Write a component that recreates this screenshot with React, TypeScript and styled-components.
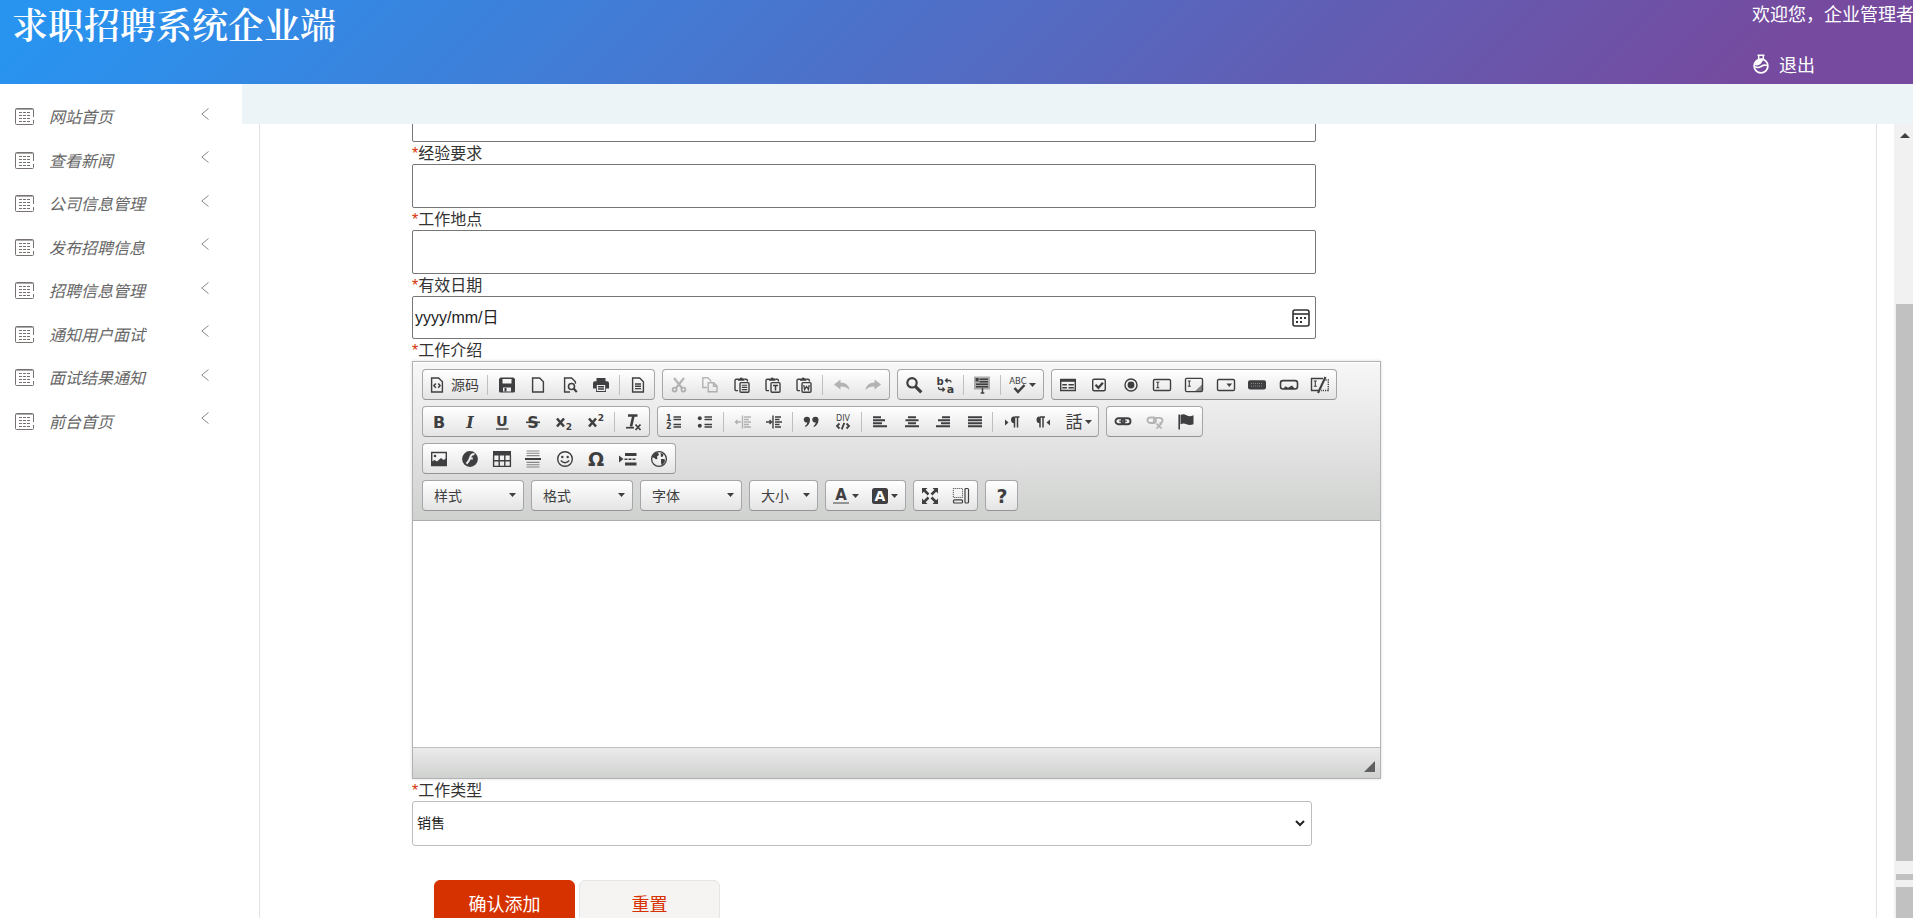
import React from 'react';
import styled, { createGlobalStyle } from 'styled-components';

const INK = '#3f3f41';
const SANS = '"Liberation Sans", "Noto Sans CJK SC", sans-serif';
const CJK = '"Noto Sans CJK SC", "Liberation Sans", sans-serif';

const GlobalStyle = createGlobalStyle`
  *, *::before, *::after { box-sizing: border-box; }
  html, body { margin: 0; padding: 0; overflow: hidden; }
  body { background: #fff; color: #333; font: 16px/22px ${SANS}; }
  button, input, select { font-family: inherit; margin: 0; }
`;

/* ---------- page frame ---------- */

const Page = styled.div`
  display: flex;
  flex-direction: column;
  height: 100vh;
`;

const Header = styled.header`
  display: flex;
  justify-content: space-between;
  flex: none;
  height: 84px;
  padding-left: 12px;
  color: #fff;
  background: linear-gradient(135deg, #2894f0 3%, #764a9e 92%);
`;

const Title = styled.h1`
  margin: 0;
  font: 600 36px/54px "Liberation Serif", "Noto Serif CJK SC", "Noto Sans CJK SC", serif;
`;

const Account = styled.div`
  display: flex;
  flex-direction: column;
  flex: none;
  width: 161px;
  font: 18px/26px ${CJK};
  white-space: nowrap;
`;

const Logout = styled.a`
  display: flex;
  align-items: center;
  gap: 9px;
  margin-top: 25px;
  color: inherit;
  text-decoration: none;
`;

const Body = styled.div`
  display: flex;
  flex: 1;
  min-height: 0;
`;

const Sidebar = styled.nav`
  flex: none;
  width: 242px;
  background: #fff;
`;

const Menu = styled.ul`
  display: flex;
  flex-direction: column;
  justify-content: space-between;
  height: 348px;
  margin: 0;
  padding: 11px 0 0;
  list-style: none;
  box-sizing: content-box;
`;

const MenuLink = styled.a`
  display: flex;
  align-items: center;
  height: 43px;
  padding: 0 33px 0 15px;
  color: #666;
  font: italic 16px/43px ${CJK};
  text-decoration: none;
`;

const MenuText = styled.span`
  flex: 1;
  padding-left: 15px;
`;

const ArrowSlot = styled.span`
  display: flex;
  padding-bottom: 6px;
`;

const Main = styled.main`
  display: flex;
  flex-direction: column;
  flex: 1;
  min-width: 0;
`;

const Strip = styled.div`
  flex: none;
  height: 40px;
  background: #edf4f8;
`;

const Viewport = styled.div`
  display: flex;
  flex: 1;
  min-height: 0;
`;

const Scroller = styled.div`
  flex: 1;
  min-width: 0;
  padding: 0 17px;
  overflow: hidden;
`;

const ScrollTrack = styled.div`
  display: flex;
  flex-direction: column;
  align-items: center;
  flex: none;
  width: 19px;
  padding: 9px 0 0 2px;
  background: #f1f1f1;
`;

const ScrollUp = styled.div`
  margin-bottom: 166px;
  border: 5px solid transparent;
  border-top: 0;
  border-bottom-color: #404040;
`;

const ScrollThumb = styled.div<{ $h: number; $after: number }>`
  flex: none;
  width: 17px;
  height: ${p => p.$h}px;
  margin-bottom: ${p => p.$after}px;
  background: #c1c1c1;
`;

const Panel = styled.section`
  min-height: 100%;
  padding-left: 152px;
  border: solid #e2e2e2;
  border-width: 0 1px;
`;

/* ---------- form ---------- */

const Form = styled.form`
  display: flex;
  flex-direction: column;
  margin-top: -26px;
`;

const Label = styled.label`
  height: 22px;
  color: #333;
  line-height: 24px;

  &::before {
    content: '*';
    color: #d63200;
  }
`;

const TextInput = styled.input`
  width: 100%;
  max-width: 904px;
  height: 44px;
  padding: 0 3px;
  border: 1px solid #767676;
  border-radius: 2px;
  background: #fff;
  font-size: 16px;
`;

const DateField = styled.div`
  display: flex;
  align-items: center;
  max-width: 904px;
  height: 43px;
  padding: 0 5px 0 2px;
  border: 1px solid #767676;
  border-radius: 2px;
`;

const DateInput = styled.input`
  flex: 1;
  padding: 0;
  border: 0;
  outline: 0;
  background: none;
  font-size: 16px;
  &::placeholder { color: #222; opacity: 1; }
`;

const PlainButton = styled.button`
  display: flex;
  padding: 0;
  border: 0;
  background: none;
`;

const SelectField = styled.div`
  display: grid;
  align-items: center;
  max-width: 900px;
  > * { grid-area: 1 / 1; }
  > svg { justify-self: end; margin-right: 7px; pointer-events: none; }
`;

const Select = styled.select`
  height: 45px;
  padding: 0 4px 3px;
  border: 1px solid #bdbdbd;
  border-radius: 3px;
  background: #fff;
  color: #222;
  font: 14px ${CJK};
  appearance: none;
`;

const Actions = styled.div`
  display: flex;
  gap: 4px;
  margin-top: 34px;
  padding-left: 22px;
`;

const ActionButton = styled.button<{ $primary?: boolean }>`
  width: 141px;
  height: 46px;
  border: 1px solid ${p => (p.$primary ? '#d63200' : '#e5e5e5')};
  border-radius: 6px;
  background: ${p => (p.$primary ? '#d63200' : '#f5f4f3')};
  color: ${p => (p.$primary ? '#fff' : '#d63200')};
  font: 18px ${CJK};
`;

/* ---------- rich text editor ---------- */

const Editor = styled.div`
  max-width: 969px;
  border: 1px solid #b2b2b6;
  box-shadow: 0 0 3px rgba(0, 0, 0, 0.15);
`;

const Toolbar = styled.div`
  display: flex;
  flex-direction: column;
  gap: 6px;
  height: 159px;
  padding: 7px 9px;
  border-bottom: 1px solid #adadad;
  background: linear-gradient(#f7f7f7, #cfd1cf);
  box-shadow: inset 0 1px 0 #fff;
`;

const ToolRow = styled.div`
  display: flex;
  gap: 7px;
`;

const ToolGroup = styled.div<{ $w: number }>`
  display: flex;
  align-items: center;
  flex: none;
  width: ${p => p.$w}px;
  height: 31px;
  border: 1px solid #a6a6aa;
  border-bottom-color: #949496;
  border-radius: 4px;
  background: linear-gradient(#fff, #e4e4e4);
`;

const ToolButton = styled.button<{ $w?: number }>`
  display: flex;
  align-items: center;
  justify-content: center;
  flex: ${p => (p.$w ? `0 0 ${p.$w}px` : '1 1 0')};
  gap: 3px;
  height: 29px;
  padding: 0;
  border: 0;
  background: none;
  color: ${INK};
  font: 14px ${CJK};
  white-space: nowrap;
  &:disabled { color: ${INK}; opacity: 0.35; }
  svg { flex: none; }
`;

const ToolText = styled.span`
  padding: 0 0 2px 3px;
`;

const Separator = styled.span`
  flex: none;
  width: 1px;
  height: 20px;
  margin: 0 3px 0 2px;
  background: #bfbfbf;
`;

const Combo = styled.button<{ $w: number }>`
  display: flex;
  align-items: center;
  justify-content: space-between;
  flex: none;
  width: ${p => p.$w}px;
  height: 31px;
  padding: 0 7px 2px 11px;
  border: 1px solid #a6a6aa;
  border-bottom-color: #949496;
  border-radius: 4px;
  background: linear-gradient(#fff, #e4e4e4);
  color: ${INK};
  font: 14px ${CJK};
`;

const EditArea = styled.div`
  height: 226px;
  background: #fff;
  outline: 0;
`;

const EditorFooter = styled.div`
  display: flex;
  align-items: flex-end;
  justify-content: flex-end;
  height: 31px;
  padding: 0 5px 6px;
  border-top: 1px solid #bfbfbf;
  background: linear-gradient(#ebebeb, #cfd1cf);
`;

/* ---------- icons ---------- */

const Svg = ({ children, size }: { children: React.ReactNode; size: number }) => (
  <svg width={size} height={size} viewBox="0 0 16 16" overflow="visible" fill="none" stroke="currentColor" strokeWidth="1.4" aria-hidden="true">
    {children}
  </svg>
);

const Glyph = ({ x, y, size, children, italic, weight = 700, serif }: {
  x: number; y: number; size: number; children: string; italic?: boolean; weight?: number; serif?: boolean;
}) => (
  <text
    x={x} y={y} fontSize={size} fontWeight={weight} fontStyle={italic ? 'italic' : 'normal'}
    fontFamily={serif ? '"DejaVu Serif", serif' : '"DejaVu Sans", sans-serif'}
    fill="currentColor" stroke="none" textAnchor="middle"
  >{children}</text>
);

const pageShape = 'M2.6 1h7l3.8 3.8V15H2.6z';
const clipboard = (
  <>
    <path d="M4 13.6H2.4Q1 13.6 1 12.2V3.6Q1 2.2 2.4 2.2H4M10.5 2.2H12Q13.4 2.2 13.4 3.6V4.5" />
    <path d="M4 3.8V1.6h1.8Q6 .4 7.2.4T8.700 1.600h1.800v2.200z" fill="currentColor" stroke="none" />
    <rect x="6" y="5.600" width="9" height="9.600" rx="1" />
  </>
);
const lines = (d: string) => <path d={d} strokeWidth="2" />;
const sansX = <path d="M1 4.500l7 8M8 4.500l-7 8" strokeWidth="2.600" />;

const ICONS: Record<string, React.ReactNode> = {
  source: <><path d={pageShape} /><path d="M6.800 6.400L4.900 8.600l1.900 2.200M9.200 6.400l1.900 2.200-1.900 2.200" strokeWidth="1.500" /></>,
  save: <><path d="M1.600.5h12.800L16 2v12q0 1.500-1.500 1.500h-13Q0 15.500 0 14V2zM3.500 2v4.500h9V2zM4 10.500v4h8v-4z" fill="currentColor" fillRule="evenodd" stroke="none" /><path d="M6.500 11v3.500" strokeWidth="2" /></>,
  newpage: <path d={pageShape} />,
  preview: <><path d="M8 15H2.600V1h7l3.800 3.800v2" /><circle cx="9.500" cy="9.500" r="3" strokeWidth="1.600" /><path d="M11.600 11.600l3.200 3.400" strokeWidth="2.200" /></>,
  print: <><path d="M3.500 1h9v3.200H14q2 0 2 2v5.300h-3V15H3v-3.500H0V6.200q0-2 2-2h1.500z" fill="currentColor" stroke="none" /><path d="M3.800 8h8.400v6H3.800z" fill="#eee" stroke="none" /><path d="M5 9.800h6M5 12h6" /></>,
  template: <><path d={pageShape} /><path d="M5 7h6M5 9.300h6M5 11.600h6" /></>,
  cut: <><path d="M3 1l8 10M13 1L5 11" strokeWidth="2.100" /><circle cx="3.600" cy="12.600" r="2" strokeWidth="1.700" /><circle cx="12.400" cy="12.600" r="2" strokeWidth="1.700" /></>,
  copy: <><path d="M5 10.500H.8V.800h5l3 3v1" /><path d="M6.200 5.800h5.600l3.200 3.200v5.800H6.200zM11.500 6v3.300H15" /></>,
  paste: <>{clipboard}<path d="M7.800 8.200h5.400M7.800 10.400h5.400M7.800 12.600h5.400" strokeWidth="1.100" /></>,
  pastetext: <>{clipboard}<path d="M8 8.400h5M10.500 8.400v5" strokeWidth="1.500" /></>,
  pasteword: <>{clipboard}<path d="M7.800 8l.8 4.500 1.900-3 1.900 3 .8-4.500" strokeWidth="1.300" /></>,
  undo: <path d="M0 7.500L6.500 2.600v3Q14 5.600 15.600 13 12 9.400 6.500 9.600v2.900z" fill="currentColor" stroke="none" />,
  redo: <path d="M16 7.500L9.500 2.600v3Q2 5.600.400 13 4 9.400 9.500 9.600v2.900z" fill="currentColor" stroke="none" />,
  find: <><circle cx="6" cy="5.800" r="4.700" strokeWidth="2.200" /><path d="M9.300 9.300l6 6" strokeWidth="3.200" /></>,
  replace: <><Glyph x={3} y={7.500} size={10}>b</Glyph><Glyph x={13.500} y={16} size={11}>a</Glyph><path d="M8.500 3.500h4.200q1.300 0 1.300 2M10.500 1.500l-2 2 2 2M1.500 10q0 2.500 1.500 2.500h4.500M5.500 10.500l2 2-2 2" strokeWidth="1.300" /></>,
  selectall: <><path d="M0-.500h16v13H0z" fill="currentColor" opacity=".4" stroke="none" /><path d="M5.500 2.200H14M5.500 4.700H14M2 7.200h12M2 9.700h12" strokeWidth="1.400" /><path d="M1.600 1h3v3.500h-3z" fill="currentColor" stroke="none" /><path d="M8.500 11v5M6.700 16h3.600" strokeWidth="1.400" /></>,
  spell: <><Glyph x={8} y={7} size={8.500} weight={400}>ABC</Glyph><path d="M4.500 11l3.500 4 6.500-7" strokeWidth="2.500" /></>,
  form: <><path d="M.7 2.500h14.600v11H.7z" /><path d="M.500 3.500h15" strokeWidth="2.600" /><path d="M2.300 7.800h4.600M2.300 10.800h4.600M8.500 7.800h5.300M8.500 10.800h5.300" strokeWidth="1.600" /></>,
  checkbox: <><rect x="1.700" y="2.200" width="12.600" height="11.600" rx="1.500" /><path d="M4.500 7.800l2.900 3 4.500-5" strokeWidth="2.300" /></>,
  radio: <><circle cx="8" cy="8" r="6" /><circle cx="8" cy="8" r="3.400" fill="currentColor" stroke="none" /></>,
  textfield: <><rect x="-.500" y="2.500" width="17" height="11" rx="1.300" /><path d="M2.300 5.300h3M3.800 5.300v5.400M2.300 10.700h3" strokeWidth="1.100" /></>,
  textarea: <><rect x="-.500" y="1.400" width="17" height="13.200" rx="1.300" /><path d="M1.800 4h3M3.300 4v5.200M1.800 9.200h3" strokeWidth="1.100" /><path d="M16 7.500v6.800H9z" fill="currentColor" opacity=".6" stroke="none" /></>,
  select: <><rect x="-.500" y="2.500" width="17" height="11" rx="1.300" /><path d="M8.500 6.500h5.600L11.300 10z" fill="currentColor" stroke="none" /></>,
  button: <><rect x="-1" y="3.200" width="18" height="9.200" rx="1.800" fill="currentColor" stroke="none" /><path d="M2 6.500h12M2 9h12" stroke="#888" strokeWidth="1" strokeDasharray="1 1" /></>,
  imagebutton: <><rect x="-.500" y="3.600" width="17" height="8.400" rx="2.500" strokeWidth="1.600" /><path d="M2 12l2.500-2.800 2.500 1.500L11 8.500l3 3.500z" fill="currentColor" stroke="none" /></>,
  hidden: <><path d="M7 13.500H-.500V1.500H11" /><path d="M13.500 3h2.800v10.500H9" strokeDasharray="1.200 1" /><path d="M1.800 4h3M3.300 4v5.200M1.800 9.200h3" strokeWidth="1.100" /><path d="M13.500 0L6 16" strokeWidth="2.100" /></>,
  bold: <Glyph x={8} y={14} size={16}>B</Glyph>,
  italic: <Glyph x={8} y={14} size={16} italic serif>I</Glyph>,
  underline: <><Glyph x={8} y={12} size={14.500}>U</Glyph><path d="M2 15h12.500" /></>,
  strike: <><Glyph x={8} y={14} size={16}>S</Glyph><path d="M1 8.300h14" strokeWidth="1.600" /></>,
  sub: <>{sansX}<Glyph x={13} y={15.500} size={9}>2</Glyph></>,
  sup: <>{sansX}<Glyph x={13} y={6.500} size={9}>2</Glyph></>,
  removeformat: <><path d="M3 1.500h9.500M8.500 1.500L6 12.500" strokeWidth="2.600" /><path d="M1 13.700h8" strokeWidth="1.700" /><path d="M10.500 10.500l5 5.500M15.500 10.500l-5 5.500" strokeWidth="1.700" /></>,
  numbered: <><Glyph x={2.800} y={6.500} size={8}>1</Glyph><Glyph x={2.800} y={15} size={8}>2</Glyph><path d="M7.500 3H15M7.500 5.500H15M7.500 10.500H15M7.500 13H15" strokeWidth="1.500" /></>,
  bulleted: <><circle cx="2.800" cy="4.300" r="2" fill="currentColor" stroke="none" /><circle cx="2.800" cy="11.800" r="2" fill="currentColor" stroke="none" /><path d="M7.500 3H15M7.500 5.500H15M7.500 10.500H15M7.500 13H15" strokeWidth="1.500" /></>,
  outdent: <><path d="M.500 8H6M2.500 6l-2 2 2 2M7.500 1.500v13" /><path d="M9 3h7M9 5.500h5M9 8h7M9 10.500h5M9 13h7" /></>,
  indent: <><path d="M0 8h5.500M3.500 6l2 2-2 2M7 1.500v13" /><path d="M9 3h6M9 5.500h4.500M9 8h7M9 10.500h4.500M9 13h6" /></>,
  quote: <path d="M4 2.700a3 3 0 0 1 3 3q0 5-4.500 7.300L2 12q2-1.500 2.300-3.600A2.900 2.900 0 1 1 4 2.700zM12.500 2.700a3 3 0 0 1 3 3q0 5-4.500 7.300l-.5-1q2-1.500 2.300-3.600a2.900 2.900 0 1 1-.3-5.700z" fill="currentColor" stroke="none" />,
  div: <><Glyph x={8} y={6.500} size={8} weight={400}>DIV</Glyph><path d="M4.500 9.500L2 12l2.500 2.500M11.500 9.500L14 12l-2.500 2.500M9.300 8.800l-2.600 6.500" strokeWidth="1.800" /></>,
  left: lines('M1 3.200h8M1 6.200h12M1 9.200h9M1 12.200h14'),
  center: lines('M4 3.200h8M1.500 6.200h13M4 9.200h8M1 12.200h14'),
  right: lines('M7 3.200h8M3 6.200h12M6 9.200h9M1 12.200h14'),
  justify: lines('M1 3.200h14M1 6.200h14M1 9.200h14M1 12.200h14'),
  ltr: <><path d="M1 5.500L4.500 8.500 1 11.500z" fill="currentColor" stroke="none" /><path d="M10.500 2.300a3.500 3.500 0 1 0 0 7zM10 2.300h5.500v1.500H10z" fill="currentColor" stroke="none" /><path d="M10.500 3v10.500M13.500 3v10.500" strokeWidth="1.500" /></>,
  rtl: <><path d="M15 5.500l-3.500 3 3.500 3z" fill="currentColor" stroke="none" /><path d="M5 2.300a3.500 3.500 0 1 0 0 7zM4.500 2.300H10v1.500H4.500z" fill="currentColor" stroke="none" /><path d="M5 3v10.500M8 3v10.500" strokeWidth="1.500" /></>,
  language: <text x="8" y="14" fontSize="17" fontFamily='"Noto Sans CJK JP", sans-serif' fill="currentColor" stroke="none" textAnchor="middle">話</text>,
  link: <><rect x=".500" y="4.200" width="9" height="6" rx="3" strokeWidth="1.900" /><rect x="6.500" y="4.200" width="9" height="6" rx="3" strokeWidth="1.900" /><path d="M4 7.200h8" strokeWidth="1" /></>,
  unlink: <><rect x=".500" y="3.500" width="8.500" height="5.500" rx="2.700" strokeWidth="1.800" /><path d="M7 8.800q-1-5 2-5h3.500q3 0 3 2.700t-3 2.500" strokeWidth="1.800" /><path d="M9.500 9.500l5 5M14.500 9.500l-5 5" strokeWidth="1.700" /></>,
  flag: <><path d="M1.200.500v15" strokeWidth="1.600" /><path d="M2.500 1q3-1.500 6 .3t7 0v9q-4 1.500-7 0t-6 0z" fill="currentColor" stroke="none" /></>,
  image: <><path d="M.700 1.500h14.600v13H.7z" /><circle cx="4" cy="5" r="1.300" fill="currentColor" stroke="none" /><path d="M1 14v-3.500l2.500-1.500 2.500 1.500L10 7l2.500 2L15 7.500V14z" fill="currentColor" stroke="none" /></>,
  flash: <><circle cx="8" cy="8" r="7.900" fill="currentColor" stroke="none" /><path d="M12.500 3Q9 3 8.200 6.500T4.500 12.700M7.800 7.500h3" stroke="#eee" strokeWidth="2" /></>,
  table: <><path d="M-1 0h18v4.500H-1z" fill="currentColor" stroke="none" /><path d="M-.400 4v11.400h16.800V4M-.400 9.700h16.800M5.200 4v11.500M10.800 4v11.500" /></>,
  rule: <><path d="M0 8h16" strokeWidth="2" /><path d="M1.500 0h13M1.500 2.300h13M1.500 4.600h13M1.500 11.400h13M1.500 13.700h13M1.500 16h13" strokeWidth="1.100" opacity=".6" /></>,
  smiley: <><circle cx="8" cy="8" r="7.300" /><circle cx="5.300" cy="6" r="1.200" fill="currentColor" stroke="none" /><circle cx="10.700" cy="6" r="1.200" fill="currentColor" stroke="none" /><path d="M3.800 9.500q4.200 4.500 8.400 0" /></>,
  omega: <Glyph x={8} y={15} size={19}>Ω</Glyph>,
  pagebreak: <><path d="M-1 4.500L3.500 8-1 11.500z" fill="currentColor" stroke="none" /><path d="M5 3.500h11.500M5 13h11.500" strokeWidth="3" /><path d="M4.500 8.200h12" strokeWidth="1.500" strokeDasharray="3 1" /></>,
  globe: <><circle cx="8" cy="8" r="7.400" strokeWidth="1.300" /><path d="M2 4.500Q4 1.300 7 1.300L8 4 6 5.500l.5 2L5 8.500 3.500 7 1.500 6.500zM9.500 2l3 1-.500 2.500-2 .500zM10 8l3.500 0 .5 2.500-2.500 3.500-1.200-.5-.3-2.500z" fill="currentColor" stroke="none" /></>,
  color: <><Glyph x={8} y={11.500} size={15}>A</Glyph><path d="M0 15h16" strokeWidth="1.700" opacity=".6" /></>,
  bgcolor: <><rect x="0" y="0" width="16" height="16" rx="2.500" fill="currentColor" stroke="none" /><text x="8" y="13" fontSize="14" fontWeight="700" fontFamily='"DejaVu Sans", sans-serif' fill="#fff" stroke="none" textAnchor="middle">A</text></>,
  maximize: <><path d="M0 0h5.500L0 5.500zM16 0h-5.500L16 5.500zM0 16h5.500L0 10.500zM16 16h-5.500l5.500-5.500z" fill="currentColor" stroke="none" /><path d="M2 2l4.500 4.500M14 2L9.500 6.500M2 14l4.500-4.500M14 14L9.500 9.500" strokeWidth="2.500" /></>,
  blocks: <><path d="M.300.500h9.200v9H.3z" strokeWidth="1" strokeDasharray="1 1" /><rect x="12" y=".500" width="3.500" height="14.500" rx="1" strokeWidth="1.200" /><rect x=".500" y="11.800" width="9" height="3.200" rx="1" strokeWidth="1.200" /></>,
  help: <Glyph x={8} y={15} size={19}>?</Glyph>,
};

const Caret = () => (
  <svg width="7" height="4" viewBox="0 0 7 4" aria-hidden="true"><path d="M0 0h7L3.500 4z" fill={INK} /></svg>
);

const ListIcon = () => (
  <svg width="19" height="17" viewBox="0 0 19 17" fill="none" stroke="#77726f" aria-hidden="true">
    <path d="M18.500 9V1.500q0-1-1-1H1.500q-1 0-1 1v14q0 1 1 1h16q1 0 1-1V12" />
    <path d="M1 1.500h17" stroke="#aaa" />
    <path d="M4 4.500h12M4 7.500h12M4 10.500h12M4 13.500h12" strokeDasharray="3 1" />
  </svg>
);

const BackArrow = () => (
  <svg width="8" height="12" viewBox="0 0 8 12" fill="none" stroke="#888" aria-hidden="true">
    <path d="M7.500.500L.8 6l6.700 5.500" />
  </svg>
);

const FlaskIcon = () => (
  <svg width="18" height="20" viewBox="0 0 18 20" fill="none" stroke="#fff" aria-hidden="true">
    <circle cx="9" cy="12" r="6.900" strokeWidth="1.700" />
    <path d="M5.500 1.200h7M6.700 1.500v4M11.300 1.500v4" strokeWidth="1.500" />
    <path d="M3 12.500q3 2 6 0t6-1" strokeWidth="1.700" />
    <path d="M3 11q0-4 4-5h4q-2 5-6 5.500z" fill="#fff" stroke="none" />
  </svg>
);

const CalendarIcon = () => (
  <svg width="18" height="18" viewBox="0 0 18 18" fill="none" stroke="#333" aria-hidden="true">
    <rect x="1" y="1" width="16" height="16" rx="2" strokeWidth="1.600" />
    <path d="M1 5h16" strokeWidth="1.600" />
    <path d="M4 9h2M8 9h2M12 9h2M4 13h2M8 13h2" strokeWidth="2" />
  </svg>
);

const Chevron = () => (
  <svg width="10" height="7" viewBox="0 0 10 7" fill="none" stroke="#222" strokeWidth="2" aria-hidden="true">
    <path d="M1 1l4 4 4-4" />
  </svg>
);

const ResizeGrip = () => (
  <svg width="11" height="11" viewBox="0 0 11 11" aria-hidden="true"><path d="M11 0v11H0z" fill="#5f5f62" /></svg>
);

/* ---------- toolbar data ---------- */

type Tool = { icon: string; name: string; text?: string; off?: boolean; menu?: boolean; w?: number } | '|';
const t = (icon: string, name: string, extra = {}): Tool => ({ icon, name, ...extra });

const ROWS: { w: number; tools: Tool[] }[][] = [
  [
    { w: 233, tools: [t('source', '源码', { text: '源码', w: 62 }), '|', t('save', '保存'), t('newpage', '新建'), t('preview', '预览'), t('print', '打印'), '|', t('template', '模板')] },
    { w: 228, tools: [t('cut', '剪切', { off: true }), t('copy', '复制', { off: true }), t('paste', '粘贴'), t('pastetext', '粘贴为无格式文本'), t('pasteword', '从 Word 粘贴'), '|', t('undo', '撤消', { off: true }), t('redo', '重做', { off: true })] },
    { w: 147, tools: [t('find', '查找'), t('replace', '替换'), '|', t('selectall', '全选'), '|', t('spell', '拼写检查', { menu: true, w: 39 })] },
    { w: 286, tools: [t('form', '表单'), t('checkbox', '复选框'), t('radio', '单选按钮'), t('textfield', '单行文本'), t('textarea', '多行文本'), t('select', '列表'), t('button', '按钮'), t('imagebutton', '图像按钮'), t('hidden', '隐藏域')] },
  ],
  [
    { w: 228, tools: [t('bold', '加粗'), t('italic', '倾斜'), t('underline', '下划线'), t('strike', '删除线'), t('sub', '下标'), t('sup', '上标'), '|', t('removeformat', '清除格式')] },
    { w: 442, tools: [t('numbered', '编号列表'), t('bulleted', '项目列表'), '|', t('outdent', '减少缩进', { off: true }), t('indent', '增加缩进'), '|', t('quote', '块引用'), t('div', 'DIV 容器'), '|', t('left', '左对齐'), t('center', '居中'), t('right', '右对齐'), t('justify', '两端对齐'), '|', t('ltr', '从左到右'), t('rtl', '从右到左'), t('language', '语言', { menu: true, w: 39 })] },
    { w: 97, tools: [t('link', '超链接'), t('unlink', '取消超链接', { off: true }), t('flag', '锚点')] },
  ],
  [
    { w: 254, tools: [t('image', '图像'), t('flash', 'Flash'), t('table', '表格'), t('rule', '水平线'), t('smiley', '表情'), t('omega', '特殊符号'), t('pagebreak', '分页符'), t('globe', 'IFrame')] },
  ],
  [
    { w: 81, tools: [t('color', '文本颜色', { menu: true }), t('bgcolor', '背景颜色', { menu: true })] },
    { w: 65, tools: [t('maximize', '全屏'), t('blocks', '显示区块')] },
    { w: 33, tools: [t('help', '关于')] },
  ],
];

const COMBOS = [
  { label: '样式', w: 102 },
  { label: '格式', w: 102 },
  { label: '字体', w: 102 },
  { label: '大小', w: 69 },
];

const MENU = ['网站首页', '查看新闻', '公司信息管理', '发布招聘信息', '招聘信息管理', '通知用户面试', '面试结果通知', '前台首页'];

const RichEditor = () => (
  <Editor>
    <Toolbar role="toolbar">
      {ROWS.map((row, r) => (
        <ToolRow key={r}>
          {r === 3 && COMBOS.map(c => (
            <Combo key={c.label} $w={c.w} type="button">{c.label}<Caret /></Combo>
          ))}
          {row.map((group, g) => (
            <ToolGroup key={g} $w={group.w}>
              {group.tools.map((tool, i) => tool === '|' ? <Separator key={i} /> : (
                <ToolButton key={i} type="button" aria-label={tool.name} disabled={tool.off} $w={tool.w}>
                  <Svg size={16}>{ICONS[tool.icon]}</Svg>
                  {tool.text && <ToolText>{tool.text}</ToolText>}
                  {tool.menu && <Caret />}
                </ToolButton>
              ))}
            </ToolGroup>
          ))}
        </ToolRow>
      ))}
    </Toolbar>
    <EditArea id="intro" role="textbox" aria-label="工作介绍" contentEditable suppressContentEditableWarning />
    <EditorFooter><ResizeGrip /></EditorFooter>
  </Editor>
);

export default function App() {
  return (
    <Page>
      <GlobalStyle />
      <Header>
        <Title>求职招聘系统企业端</Title>
        <Account>
          <span>欢迎您，企业管理者</span>
          <Logout href="#logout"><FlaskIcon />退出</Logout>
        </Account>
      </Header>
      <Body>
        <Sidebar>
          <Menu>
            {MENU.map(item => (
              <li key={item}>
                <MenuLink href="#menu">
                  <ListIcon />
                  <MenuText>{item}</MenuText>
                  <ArrowSlot><BackArrow /></ArrowSlot>
                </MenuLink>
              </li>
            ))}
          </Menu>
        </Sidebar>
        <Main>
          <Strip />
          <Viewport>
            <Scroller>
              <Panel>
                <Form>
                  <TextInput aria-label="学历要求" />
                  <Label htmlFor="experience">经验要求</Label>
                  <TextInput id="experience" />
                  <Label htmlFor="place">工作地点</Label>
                  <TextInput id="place" />
                  <Label htmlFor="expires">有效日期</Label>
                  <DateField>
                    <DateInput id="expires" placeholder="yyyy/mm/日" />
                    <PlainButton type="button" aria-label="选择日期"><CalendarIcon /></PlainButton>
                  </DateField>
                  <Label as="span">工作介绍</Label>
                  <RichEditor />
                  <Label htmlFor="kind">工作类型</Label>
                  <SelectField>
                    <Select id="kind"><option>销售</option></Select>
                    <Chevron />
                  </SelectField>
                  <Actions>
                    <ActionButton $primary type="submit">确认添加</ActionButton>
                    <ActionButton type="reset">重置</ActionButton>
                  </Actions>
                </Form>
              </Panel>
            </Scroller>
            <ScrollTrack>
              <ScrollUp />
              <ScrollThumb $h={557} $after={13} />
              <ScrollThumb $h={6} $after={7} />
              <ScrollThumb $h={31} $after={0} />
            </ScrollTrack>
          </Viewport>
        </Main>
      </Body>
    </Page>
  );
}
